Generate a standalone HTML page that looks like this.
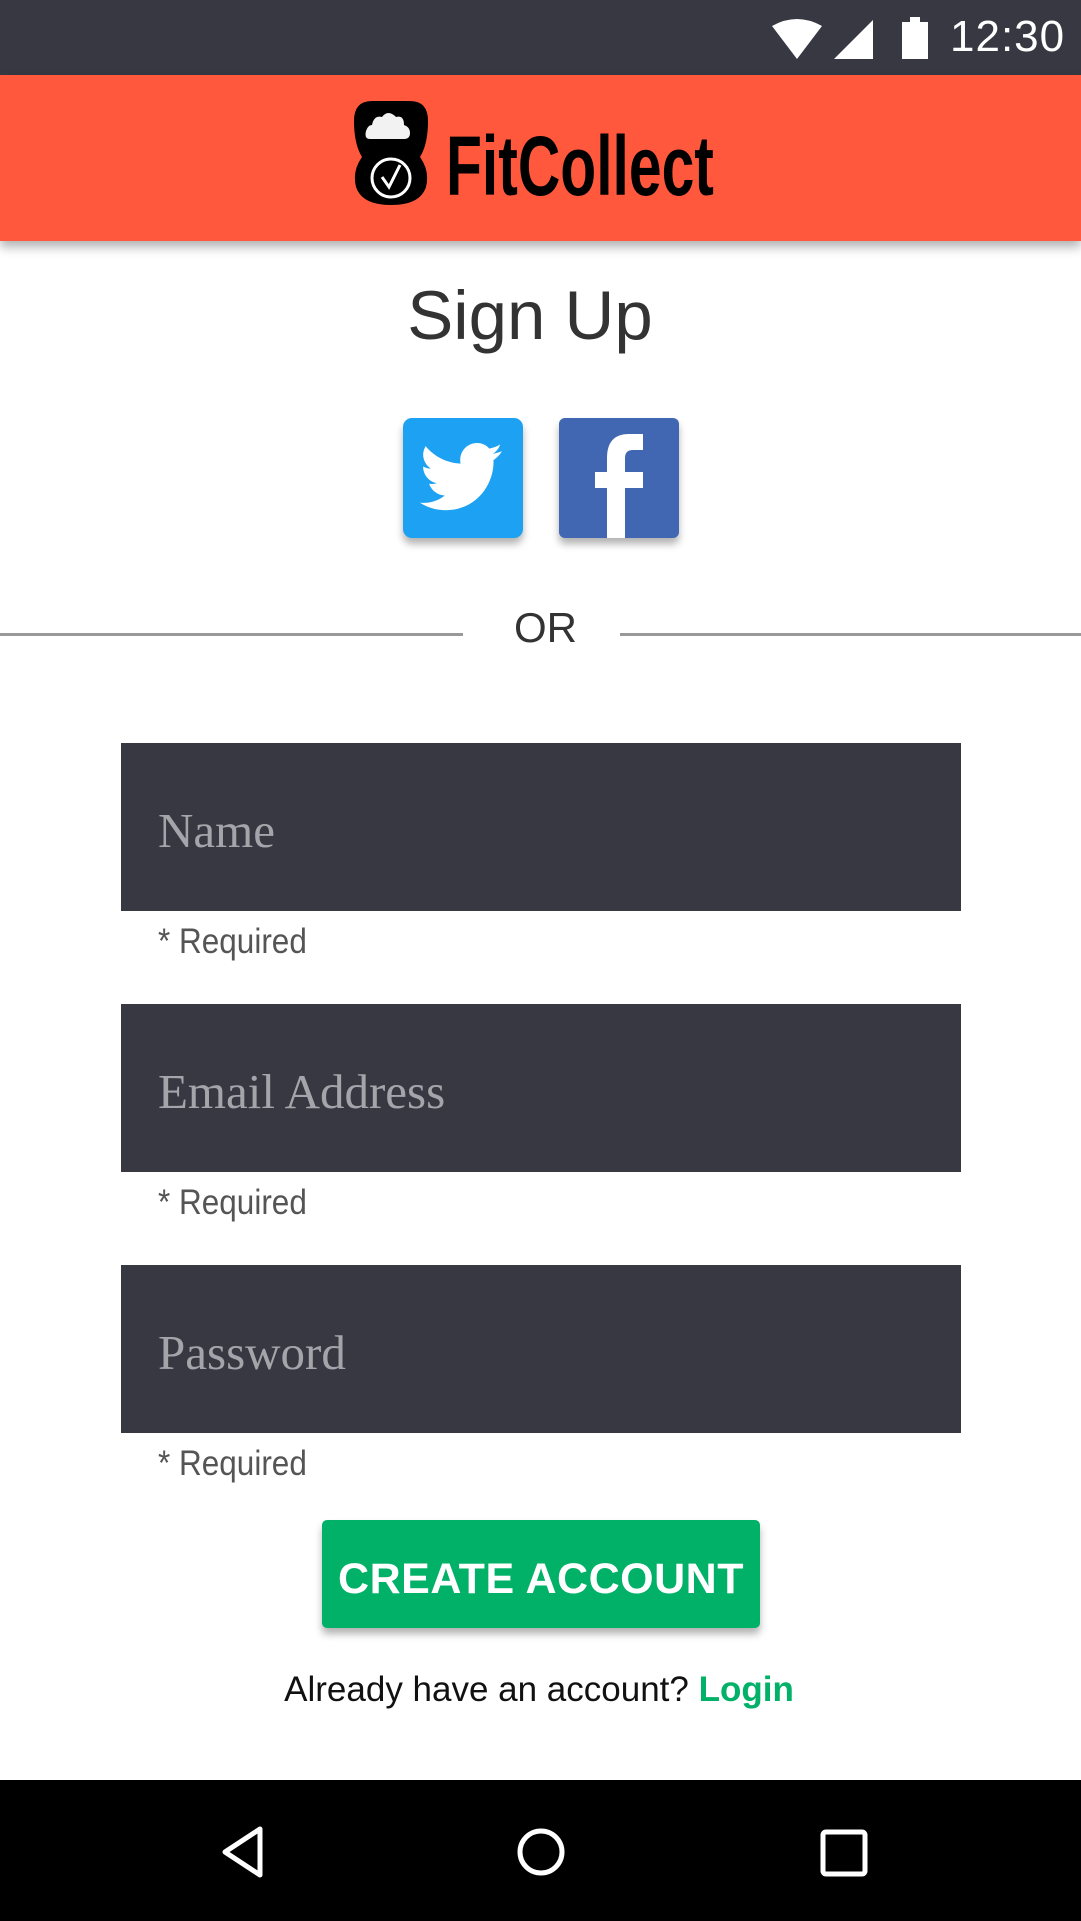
<!DOCTYPE html>
<html><head><meta charset="utf-8"><style>
*{margin:0;padding:0;box-sizing:border-box}
body{width:1081px;height:1921px;background:#fff;position:relative;overflow:hidden;font-family:"Liberation Sans",sans-serif}
.abs{position:absolute}
.status{left:0;top:0;width:1081px;height:75px;background:#383842}
.header{left:0;top:75px;width:1081px;height:166px;background:#FF583C;box-shadow:0 6px 10px rgba(0,0,0,0.3)}
.input{left:121px;width:840px;height:168px;background:#383842;color:#a4a4aa;font-family:"Liberation Serif",serif;font-size:49px;padding-left:37px;padding-top:6px;display:flex;align-items:center}
.req{left:158px;font-size:35px;color:#555;font-family:"Liberation Sans Narrow","Liberation Sans",sans-serif;transform:scaleX(0.9);transform-origin:left top}
.line{height:3px;background:#999;top:633px}
</style></head><body>
<div class="abs status"></div>
<svg class="abs" style="left:770px;top:18px" width="80" height="42" viewBox="0 0 80 42">
<path d="M2 8 Q27 -6 52 8 L27 41 Z" fill="#fff"/>
</svg>
<svg class="abs" style="left:832px;top:18px" width="42" height="42" viewBox="0 0 42 42"><path d="M2 41 L41 2 L41 41 Z" fill="#fff"/></svg>
<div class="abs" style="left:902px;top:22px;width:26px;height:37px;background:#fff"></div>
<div class="abs" style="left:910px;top:17px;width:10px;height:6px;background:#fff"></div>
<div class="abs" style="left:950px;top:12px;font-size:44px;color:#fff;font-family:'Liberation Sans Narrow','Liberation Sans',sans-serif;letter-spacing:1px">12:30</div>
<div class="abs header"></div>
<svg class="abs" style="left:352px;top:99px" width="78" height="108" viewBox="0 0 78 108">
<path d="M20 2 H58 Q76 2 76 22 Q76 45 68 58 Q78 72 74 88 Q68 106 39 106 Q10 106 4 88 Q0 72 10 58 Q2 45 2 22 Q2 2 20 2Z" fill="#000"/>
<path d="M18 40 Q12 40 14 32 Q16 26 20 26 Q22 16 30 18 Q36 10 44 18 Q52 16 52 26 Q58 28 58 34 Q58 40 52 40Z" fill="#f2f2f2"/>
<circle cx="39" cy="79" r="19" fill="none" stroke="#fff" stroke-width="3"/>
<path d="M30 78 L37 88 L48 66" fill="none" stroke="#fff" stroke-width="3"/>
</svg>
<div class="abs" style="left:446px;top:124px;font-size:84px;font-weight:bold;color:#000;font-family:'Liberation Sans Narrow','Liberation Sans',sans-serif;transform:scaleX(0.7);transform-origin:left top;line-height:1">FitCollect</div>
<div class="abs" style="left:0;width:1060px;top:276px;text-align:center;font-size:69px;color:#333">Sign Up</div>
<div class="abs" style="left:403px;top:418px;width:120px;height:120px;background:#1DA1F2;border-radius:9px;box-shadow:0 6px 8px rgba(0,0,0,0.3)"></div>
<svg class="abs" style="left:420px;top:440px" width="84" height="76" viewBox="0 0 24 20"><path d="M23.6 2.3c-.9.4-1.8.6-2.8.8 1-.6 1.8-1.6 2.1-2.7-.9.6-2 1-3.1 1.2C19 .6 17.7 0 16.3 0c-2.7 0-4.8 2.2-4.8 4.8 0 .4 0 .8.1 1.1C7.5 5.7 4 3.8 1.6.9c-.4.7-.7 1.600-.7 2.4 0 1.7.9 3.2 2.2 4-.8 0-1.5-.2-2.2-.6v.1c0 2.3 1.7 4.3 3.9 4.7-.4.1-.8.2-1.3.2-.3 0-.6 0-.9-.1.6 1.9 2.4 3.3 4.5 3.4-1.7 1.3-3.7 2.1-6 2.1-.4 0-.8 0-1.2-.1 2.1 1.4 4.7 2.2 7.4 2.2 8.900 0 13.7-7.4 13.7-13.7v-.6c1-.7 1.8-1.5 2.4-2.5z" fill="#fff"/></svg>
<div class="abs" style="left:559px;top:418px;width:120px;height:120px;background:#4267B2;border-radius:6px;box-shadow:0 6px 8px rgba(0,0,0,0.3);overflow:hidden">
<svg width="120" height="120" viewBox="0 0 120 120"><path d="M66 120 V70 H84 V54 H66 V40 Q66 32 74 32 H84 V16 H70 Q48 16 48 40 V54 H36 V70 H48 V120Z" fill="#fff"/></svg></div>
<div class="abs line" style="left:0;width:463px"></div>
<div class="abs line" style="left:620px;width:461px"></div>
<div class="abs" style="left:463px;width:157px;top:604px;text-align:center;font-size:42px;color:#333;padding-left:8px">OR</div>
<div class="abs input" style="top:743px">Name</div>
<div class="abs req" style="top:922px">* Required</div>
<div class="abs input" style="top:1004px">Email Address</div>
<div class="abs req" style="top:1183px">* Required</div>
<div class="abs input" style="top:1265px">Password</div>
<div class="abs req" style="top:1444px">* Required</div>
<div class="abs" style="left:322px;top:1520px;width:438px;height:108px;background:#00B167;border-radius:5px;box-shadow:0 6px 8px rgba(0,0,0,0.3);color:#fff;font-weight:bold;font-size:43px;display:flex;align-items:center;justify-content:center;letter-spacing:0.5px;padding-top:10px">CREATE ACCOUNT</div>
<div class="abs" style="left:0;width:1078px;top:1670px;text-align:center;font-size:35px;color:#111">Already have an account? <b style="color:#00B167">Login</b></div>
<div class="abs" style="left:0;top:1780px;width:1081px;height:141px;background:#000"></div>
<svg class="abs" style="left:210px;top:1820px" width="680" height="70" viewBox="0 0 680 70">
<path d="M50 9 L50 55 L15 32 Z" fill="none" stroke="#fff" stroke-width="5" stroke-linejoin="round"/>
<circle cx="331" cy="32" r="21" fill="none" stroke="#fff" stroke-width="5"/>
<rect x="613" y="12" width="42" height="42" rx="3" fill="none" stroke="#fff" stroke-width="5"/>
</svg>
</body></html>
